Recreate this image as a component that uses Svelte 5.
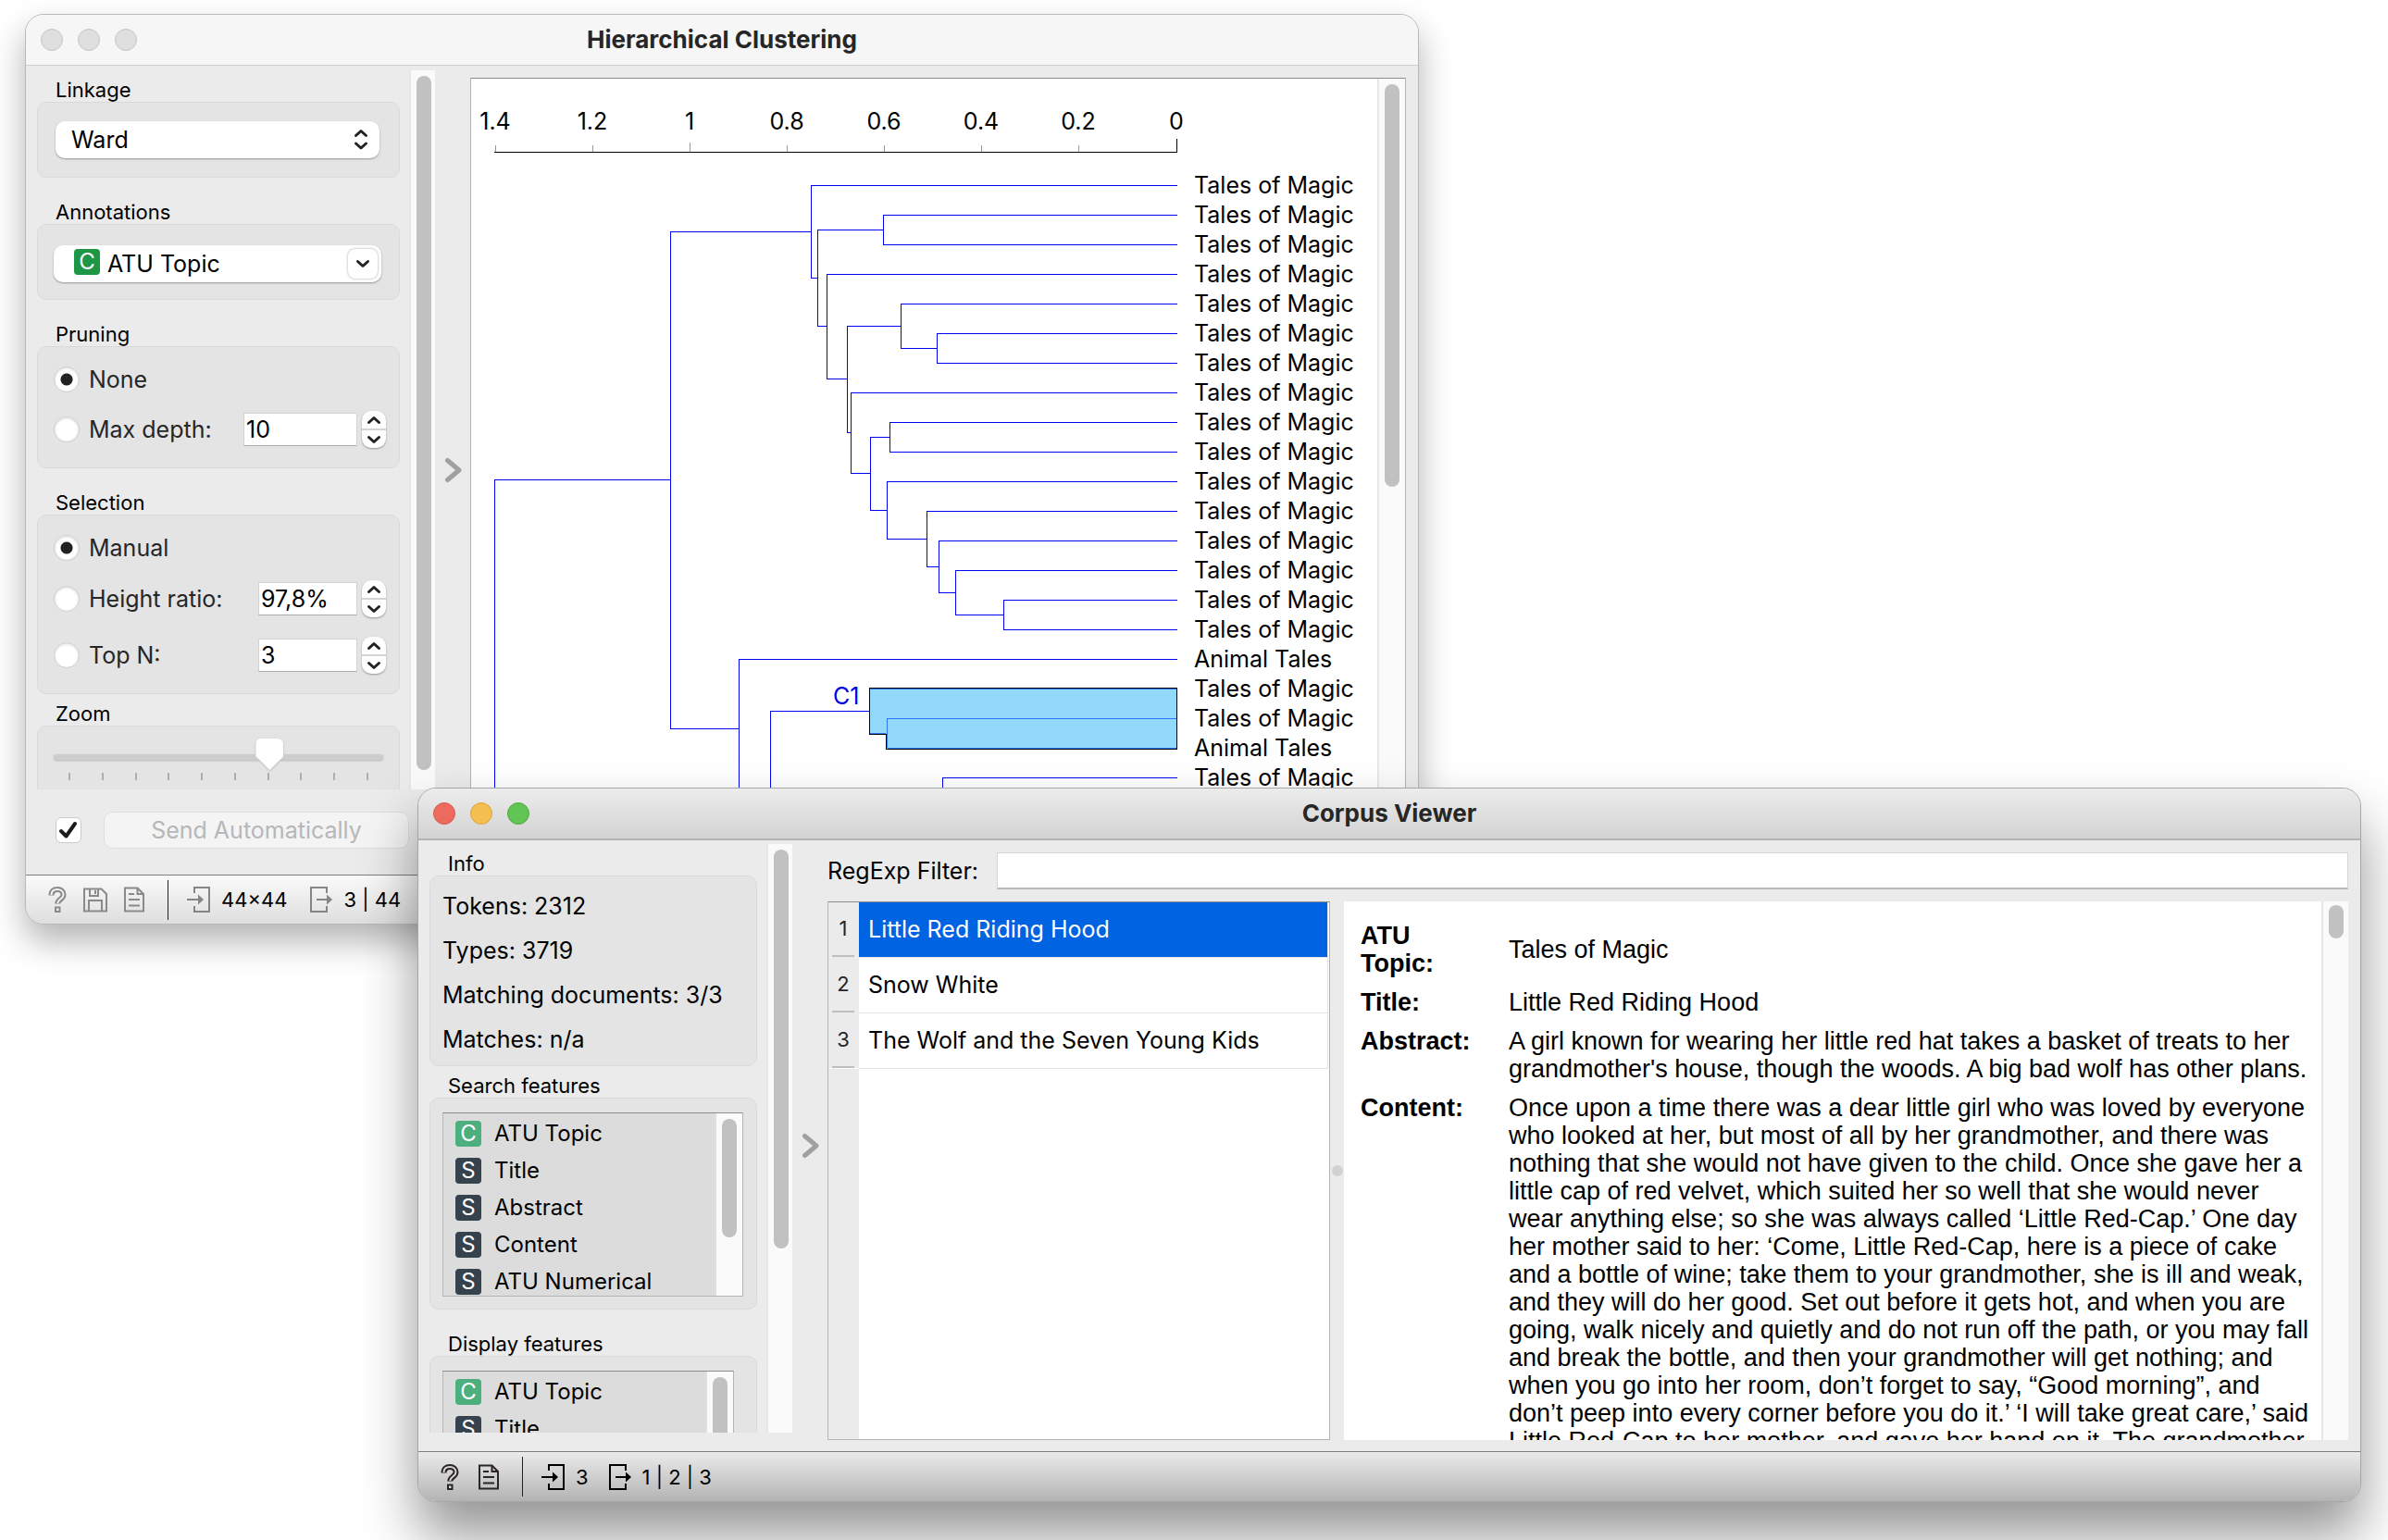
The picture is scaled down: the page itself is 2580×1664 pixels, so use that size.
<script>
  let linkage = $state('Ward');
  let annotation = $state('ATU Topic');
  let pruning = $state('none');
  let selection = $state('manual');
  let maxDepth = $state('10');
  let heightRatio = $state('97,8%');
  let topN = $state('3');
  let zoom = $state(67);
  let autoSend = $state(true);
  let filter = $state('');
  let current = $state(0);

  const axis = [
    { label: '1.4', x: 535, y: 157 },
    { label: '1.2', x: 640, y: 157 },
    { label: '1', x: 745, y: 154 },
    { label: '0.8', x: 850, y: 157 },
    { label: '0.6', x: 955, y: 157 },
    { label: '0.4', x: 1060, y: 157 },
    { label: '0.2', x: 1165, y: 157 },
    { label: '0', x: 1271, y: 150 }
  ];

  // Cluster brackets: joint x, then the two branches as [y, end x]
  const END = 1271;
  const joints = [
    [534, [518, 724], [1100, 534]],
    [724, [250, 876], [787, 798]],
    [876, [200, END], [300, 883]],
    [883, [248, 954], [352, 893]],
    [954, [232, END], [264, END]],
    [893, [296, END], [409, 915]],
    [915, [352, 973], [467, 919]],
    [973, [328, END], [376, 1012]],
    [1012, [360, END], [392, END]],
    [919, [424, END], [511, 940]],
    [940, [472, 961], [551, 958]],
    [961, [456, END], [488, END]],
    [958, [520, END], [582, 1001]],
    [1001, [552, END], [612, 1014]],
    [1014, [584, END], [640, 1032]],
    [1032, [616, END], [664, 1084]],
    [1084, [648, END], [680, END]],
    [798, [712, END], [1000, 798]],
    [832, [768, 939], [1000, 832]],
    [1018, [840, END], [1000, 1018]]
  ];
  const treePath = joints
    .map(([x, [y1, e1], [y2, e2]]) => `M${e1} ${y1}H${x}V${y2}H${e2}`)
    .join('');

  const leaves = Array.from({ length: 21 }, (_, i) => (i === 16 || i === 19 ? 'Animal Tales' : 'Tales of Magic'));

  const info = ['Tokens: 2312', 'Types: 3719', 'Matching documents: 3/3', 'Matches: n/a'];
  const searchFeatures = [
    ['C', 'ATU Topic'],
    ['S', 'Title'],
    ['S', 'Abstract'],
    ['S', 'Content'],
    ['S', 'ATU Numerical']
  ];
  const displayFeatures = [
    ['C', 'ATU Topic'],
    ['S', 'Title']
  ];
  const documents = ['Little Red Riding Hood', 'Snow White', 'The Wolf and the Seven Young Kids'];
  const fields = [
    ['ATU Topic:', 'Tales of Magic'],
    ['Title:', 'Little Red Riding Hood'],
    ['Abstract:', "A girl known for wearing her little red hat takes a basket of treats to her grandmother's house, though the woods. A big bad wolf has other plans."],
    ['Content:', 'Once upon a time there was a dear little girl who was loved by everyone who looked at her, but most of all by her grandmother, and there was nothing that she would not have given to the child. Once she gave her a little cap of red velvet, which suited her so well that she would never wear anything else; so she was always called ‘Little Red-Cap.’ One day her mother said to her: ‘Come, Little Red-Cap, here is a piece of cake and a bottle of wine; take them to your grandmother, she is ill and weak, and they will do her good. Set out before it gets hot, and when you are going, walk nicely and quietly and do not run off the path, or you may fall and break the bottle, and then your grandmother will get nothing; and when you go into her room, don’t forget to say, “Good morning”, and don’t peep into every corner before you do it.’ ‘I will take great care,’ said Little Red-Cap to her mother, and gave her hand on it. The grandmother']
  ];
</script>

{#snippet lights()}
  <div class="lights">
    <button class="light close" aria-label="Close"></button>
    <button class="light minimise" aria-label="Minimise"></button>
    <button class="light expand" aria-label="Zoom"></button>
  </div>
{/snippet}

{#snippet helpIcon()}
  <svg width="20" height="28" viewBox="0 0 20 28" fill="none">
    <path d="M3.500 9.500C3.500 5 6.300 3 10 3s6.500 2.200 6.500 5.800c0 4.700-6.300 4.800-6.300 9.700" stroke="currentColor" stroke-width="6" />
    <path d="M3.500 8V9C3.500 5 6.300 3 10 3s6.500 2.200 6.500 5.800c0 4.700-6.300 4.800-6.300 9.200" stroke="var(--bar)" stroke-width="2" />
    <rect x="8" y="22.500" width="4.500" height="4.500" fill="var(--bar)" stroke="currentColor" stroke-width="2" />
  </svg>
{/snippet}

{#snippet saveIcon()}
  <svg width="26" height="27" viewBox="0 0 26 27" fill="none" stroke="currentColor" stroke-width="2">
    <path d="M1 1.500H19.500L25 7V25.500H1Z" />
    <path d="M7 1.500V9H16V1.500M13 3V7M6 25V14H20V25" />
  </svg>
{/snippet}

{#snippet reportIcon()}
  <svg width="22" height="28" viewBox="0 0 22 28" fill="none" stroke="currentColor" stroke-width="2">
    <path d="M1 1.500H14.500L21 8V26.500H1Z" />
    <path d="M14.500 1.500V8H21M5 8H11M5 14H17M5 20.500H17" />
  </svg>
{/snippet}

{#snippet inputIcon()}
  <svg width="25" height="28" viewBox="0 0 25 28" fill="none" stroke="currentColor" stroke-width="2">
    <path d="M8 7V1H24V27H8V21M0 14H13" />
    <path d="M12 8.500L18 14L12 19.500Z" fill="currentColor" stroke="none" />
  </svg>
{/snippet}

{#snippet outputIcon()}
  <svg width="24" height="28" viewBox="0 0 24 28" fill="none" stroke="currentColor" stroke-width="2">
    <path d="M18 7V1H1V27H18V21M7 14H19" />
    <path d="M18 8.500L24 14L18 19.500Z" fill="currentColor" stroke="none" />
  </svg>
{/snippet}

{#snippet expander(label)}
  <button class="expander" aria-label={label}>
    <svg width="20" height="28" viewBox="0 0 20 28" fill="none" stroke="#a0a0a0" stroke-width="5" stroke-linecap="round" stroke-linejoin="round">
      <path d="M3.500 3.500L16 14L3.500 24.500" />
    </svg>
  </button>
{/snippet}

{#snippet stepper(name)}
  <span class="stepper">
    <button aria-label={`Increase ${name}`}>
      <svg width="16" height="10" viewBox="0 0 16 10"><path d="M2.500 7.500L8 2.500L13.500 7.500" /></svg>
    </button>
    <button aria-label={`Decrease ${name}`}>
      <svg width="16" height="10" viewBox="0 0 16 10"><path d="M2.500 2.500L8 7.500L13.500 2.500" /></svg>
    </button>
  </span>
{/snippet}

{#snippet featureList(name, features, narrow)}
  <div class="features" class:narrow>
    <ul aria-label={name}>
      {#each features as [kind, label]}
        <li><span class="badge" class:string={kind === 'S'}>{kind}</span>{label}</li>
      {/each}
    </ul>
    <div class="track"><div class="thumb"></div></div>
  </div>
{/snippet}

<main class="desktop">
  <section class="window clustering" aria-label="Hierarchical Clustering">
    <header class="titlebar">
      {@render lights()}
      <h1>Hierarchical Clustering</h1>
    </header>

    <div class="body">
      <div class="side">
        <div class="scroller">
          <div class="groups">
            <section class="group">
              <h2><label for="linkage">Linkage</label></h2>
              <div class="box linkage-box">
                <div class="combo">
                  <select id="linkage" bind:value={linkage}>
                    <option>Ward</option>
                    <option>Average</option>
                  </select>
                  <svg class="updown" width="16" height="24" viewBox="0 0 16 24"><path d="M2.500 7.500L8 2.500L13.500 7.500M2.500 16L8 21L13.500 16" /></svg>
                </div>
              </div>
            </section>

            <section class="group">
              <h2><label for="annotation">Annotations</label></h2>
              <div class="box annotation-box">
                <div class="combo">
                  <select id="annotation" class="with-badge" bind:value={annotation}>
                    <option>ATU Topic</option>
                    <option>Title</option>
                  </select>
                  <span class="badge vivid">C</span>
                  <span class="drop"><svg width="16" height="10" viewBox="0 0 16 10"><path d="M2.500 2.500L8 7.500L13.500 2.500" /></svg></span>
                </div>
              </div>
            </section>

            <section class="group">
              <h2>Pruning</h2>
              <div class="box options pruning-box">
                <div class="option">
                  <label><input type="radio" name="pruning" value="none" bind:group={pruning} />None</label>
                </div>
                <div class="option stepped">
                  <label><input type="radio" name="pruning" value="depth" bind:group={pruning} />Max depth:</label>
                  <input class="number wide" aria-label="Maximum depth" bind:value={maxDepth} />
                  {@render stepper('maximum depth')}
                </div>
              </div>
            </section>

            <section class="group">
              <h2>Selection</h2>
              <div class="box options">
                <div class="option">
                  <label><input type="radio" name="selection" value="manual" bind:group={selection} />Manual</label>
                </div>
                <div class="option stepped">
                  <label><input type="radio" name="selection" value="ratio" bind:group={selection} />Height ratio:</label>
                  <input class="number" aria-label="Height ratio" bind:value={heightRatio} />
                  {@render stepper('height ratio')}
                </div>
                <div class="option stepped">
                  <label><input type="radio" name="selection" value="top" bind:group={selection} />Top N:</label>
                  <input class="number" aria-label="Top N" bind:value={topN} />
                  {@render stepper('top N')}
                </div>
              </div>
            </section>

            <section class="group compact">
              <h2><label for="zoom">Zoom</label></h2>
              <div class="box zoom-box">
                <input id="zoom" type="range" min="0" max="100" bind:value={zoom} />
                <div class="ticks">
                  {#each Array(10) as _}<span></span>{/each}
                </div>
              </div>
            </section>
          </div>
          <div class="track"><div class="thumb"></div></div>
        </div>

        <div class="send">
          <span class="check">
            <input type="checkbox" aria-label="Send automatically" bind:checked={autoSend} />
            {#if autoSend}
              <svg width="28" height="28" viewBox="0 0 28 28"><path d="M6 15L11.500 20.500L21 7" fill="none" stroke="#1c1c1c" stroke-width="4" stroke-linecap="round" stroke-linejoin="round" /></svg>
            {/if}
          </span>
          <button class="send-button" disabled>Send Automatically</button>
        </div>
      </div>

      {@render expander('Toggle controls')}

      <div class="view">
        <svg class="tree" width="765" height="834" viewBox="509 85 765 834" shape-rendering="crispEdges" aria-label="Dendrogram">
          {#each axis as tick, i}
            <text x={tick.x} y="140" text-anchor="middle">{tick.label}</text>
            <path d={`M${tick.x} ${tick.y}V164`} stroke={i === axis.length - 1 ? '#000' : '#9a9a9a'} />
          {/each}
          <path d="M534 164.500H1272" stroke="#000" />
          <polygon points="939,743.500 1271.500,743.500 1271.500,809.500 957.500,809.500 957.500,793.500 939,793.500" fill="#92d8fb" stroke="#000" />
          <path d="M1271 776.500H958.500V808M1271 808.500H959M940 792.500H957M1271 744.500H940" fill="none" stroke="#2f75f7" />
          <g transform="translate(0.5 0.5)"><path d={treePath} fill="none" stroke="#0000f5" /></g>
          <text x="900" y="761" class="cluster">C1</text>
        </svg>
        <ol class="leaves">
          {#each leaves as leaf}<li>{leaf}</li>{/each}
        </ol>
        <div class="track"><div class="thumb"></div></div>
      </div>
    </div>

    <footer class="status">
      <button aria-label="Help">{@render helpIcon()}</button>
      <button aria-label="Save">{@render saveIcon()}</button>
      <button aria-label="Report">{@render reportIcon()}</button>
      <span class="divider"></span>
      <span class="port">{@render inputIcon()}<span>44×44</span></span>
      <span class="port">{@render outputIcon()}<span>3 | 44</span></span>
    </footer>
  </section>

  <section class="window corpus" aria-label="Corpus Viewer">
    <header class="titlebar">
      {@render lights()}
      <h1>Corpus Viewer</h1>
    </header>

    <div class="body">
      <div class="side">
        <div class="scroller">
          <div class="groups">
            <section class="group compact">
              <h2>Info</h2>
              <div class="box info-box">
                {#each info as line}<p>{line}</p>{/each}
              </div>
            </section>
            <section class="group compact">
              <h2>Search features</h2>
              <div class="box features-box">{@render featureList('Search features', searchFeatures, false)}</div>
            </section>
            <section class="group">
              <h2>Display features</h2>
              <div class="box features-box">{@render featureList('Display features', displayFeatures, true)}</div>
            </section>
          </div>
          <div class="track"><div class="thumb"></div></div>
        </div>
      </div>

      {@render expander('Toggle controls')}

      <div class="content">
        <div class="filter">
          <label for="filter">RegExp Filter:</label>
          <input id="filter" bind:value={filter} />
        </div>
        <div class="panes">
          <div class="documents">
            <table>
              <tbody>
                {#each documents as name, i}
                  <tr class:current={i === current} onclick={() => (current = i)}>
                    <th scope="row"><span>{i + 1}</span></th>
                    <td>{name}</td>
                  </tr>
                {/each}
              </tbody>
            </table>
            <div class="gutter"></div>
          </div>
          <div class="splitter"><span></span></div>
          <div class="reader">
            <article>
              <table>
                <tbody>
                  {#each fields as [name, value]}
                    <tr><th scope="row">{name}</th><td>{value}</td></tr>
                  {/each}
                </tbody>
              </table>
            </article>
            <div class="track"><div class="thumb"></div></div>
          </div>
        </div>
      </div>
    </div>

    <footer class="status">
      <button aria-label="Help">{@render helpIcon()}</button>
      <button aria-label="Report">{@render reportIcon()}</button>
      <span class="divider"></span>
      <span class="port">{@render inputIcon()}<span>3</span></span>
      <span class="port">{@render outputIcon()}<span>1 | 2 | 3</span></span>
    </footer>
  </section>
</main>

<style>
  :global(body) { background: #fff; }

  .desktop, .desktop * { box-sizing: border-box; }
  .desktop {
    position: relative;
    min-height: 100vh;
    overflow: hidden;
    font: 25px/32px Inter, "Liberation Sans", sans-serif;
    color: #000;
  }
  h1, h2, p, ul, ol { margin: 0; padding: 0; list-style: none; }
  button, input, select { font: inherit; color: inherit; margin: 0; padding: 0; border: 0; background: none; }
  svg { display: block; flex: none; }

  /* Windows */
  .window {
    position: absolute;
    display: flex;
    flex-direction: column;
    overflow: hidden;
    border: 1px solid #b9b9b9;
    border-radius: 20px;
    background: #ebebeb;
  }
  .clustering {
    left: 27px; top: 15px; right: 1047px; bottom: 665px;
    box-shadow: 0 18px 36px rgba(0, 0, 0, .3);
    --bar: #f0f0f0;
  }
  .corpus {
    left: 451px; top: 851px; right: 29px; bottom: 41px;
    border-color: #a6a6a6;
    box-shadow: 0 36px 60px rgba(0, 0, 0, .42);
    --bar: #d6d6d6;
  }

  .titlebar {
    flex: none;
    display: grid;
    grid-template-columns: 1fr auto 1fr;
    align-items: center;
    height: 55px;
    padding: 0 16px;
    border-bottom: 1px solid #cfcfcf;
    background: #f6f6f6;
  }
  .corpus .titlebar { height: 56px; border-bottom: 2px solid #b4b4b4; background: linear-gradient(#ececec, #d3d3d3); }
  h1 { font-size: 26px; font-weight: 700; line-height: 32px; color: #262626; }
  .lights { display: flex; gap: 16px; }
  .light { width: 24px; height: 24px; border: 1px solid #c4c4c4; border-radius: 50%; background: #dfdfdf; }
  .corpus .close { background: #ed6a5e; border-color: #d35b50; }
  .corpus .minimise { background: #f5bf4f; border-color: #d8a442; }
  .corpus .expand { background: #61c554; border-color: #52a844; }

  .body { flex: 1; min-height: 0; display: flex; }
  .clustering .body { padding-top: 5px; }
  .corpus .body { padding-top: 4px; }

  .side { flex: none; display: flex; flex-direction: column; min-height: 0; padding-left: 12px; }
  .clustering .side { width: 442px; }
  .corpus .side { width: 404px; padding-bottom: 20px; }
  .scroller { flex: 1; min-height: 0; display: flex; justify-content: space-between; overflow: hidden; }
  .clustering .groups { width: 392px; }
  .corpus .groups { width: 354px; }

  .track { flex: none; width: 28px; padding: 6px 4px 0 6px; border-left: 2px solid #e6e6e6; background: #fafafa; }
  .thumb { width: 16px; border-radius: 8px; background: #c1c1c1; }
  .clustering .scroller .thumb { height: 750px; }
  .corpus .scroller > .track > .thumb { height: 431px; }

  /* Groups */
  .group { margin-top: 16px; }
  .group:first-child, .group.compact { margin-top: 0; }
  h2 { height: 34px; padding: 8px 20px 0; font-size: 22px; font-weight: 400; line-height: 26px; }
  .box { border: 1px solid #dadada; border-radius: 10px; background: #e4e4e4; }
  .linkage-box { padding: 20px 21px 20px 19px; }
  .annotation-box { padding: 22px 19px 18px 17px; }

  .combo { display: grid; align-items: center; }
  .combo > * { grid-area: 1 / 1; }
  select {
    appearance: none;
    width: 100%;
    height: 40px;
    padding-left: 17px;
    border-radius: 10px;
    background: #fff;
    box-shadow: 0 1px 2px rgba(0, 0, 0, .35);
  }
  select.with-badge { padding-left: 58px; }
  .updown, .drop { justify-self: end; pointer-events: none; }
  .updown { margin-right: 12px; }
  .drop {
    display: grid;
    place-items: center;
    width: 32px;
    height: 32px;
    margin-right: 4px;
    border-radius: 8px;
    background: #fff;
    box-shadow: 0 0 3px rgba(0, 0, 0, .35);
  }
  .updown path, .drop path, .stepper path {
    fill: none; stroke: #222; stroke-width: 3; stroke-linecap: round; stroke-linejoin: round;
  }
  .badge {
    flex: none;
    width: 28px;
    height: 28px;
    border-radius: 4px;
    background: #4caf7d;
    color: #fff;
    font-size: 24px;
    line-height: 28px;
    text-align: center;
  }
  .badge.string { background: #37424f; }
  .badge.vivid { margin: 0 0 4px 22px; background: #1d9745; pointer-events: none; }

  .options { display: flex; flex-direction: column; gap: 21px; padding: 21px 14px 21px 17px; }
  .pruning-box { gap: 20px; }
  .option { display: flex; align-items: center; color: #262626; }
  .option.stepped { height: 40px; }
  .option:not(.stepped) { height: 28px; }
  .option label { flex: 1; display: flex; align-items: center; gap: 10px; white-space: nowrap; }
  input[type='radio'] {
    appearance: none;
    width: 28px;
    height: 28px;
    border: 1px solid #cfcfcf;
    border-radius: 50%;
    background: #fff;
    box-shadow: inset 0 1px 3px rgba(0, 0, 0, .15);
  }
  input[type='radio']:checked { background: radial-gradient(circle, #222 0 6px, #fff 7px); }
  .number {
    width: 107px;
    height: 36px;
    padding-left: 2px;
    border: 1px solid #d2d2d2;
    border-bottom-color: #acacac;
    background: #fff;
    color: #000;
  }
  .number.wide { width: 123px; }
  .stepper {
    display: flex;
    flex-direction: column;
    width: 26px;
    height: 40px;
    margin-left: 5px;
    border-radius: 10px;
    background: #fff;
    box-shadow: 0 1px 2px rgba(0, 0, 0, .35);
  }
  .stepper button { flex: 1; display: grid; place-items: center; }
  .stepper button + button { border-top: 2px solid #d4d4d4; }

  .zoom-box { height: 120px; padding: 16px 17px; }
  input[type='range'] { appearance: none; display: block; width: 100%; height: 34px; filter: drop-shadow(0 1px 1px rgba(0, 0, 0, .2)); }
  input[type='range']::-webkit-slider-runnable-track { height: 6px; border-radius: 3px; background: #cdcdcd; }
  input[type='range']::-webkit-slider-thumb {
    appearance: none;
    width: 30px;
    height: 34px;
    margin-top: -17px;
    border-radius: 6px;
    background: #fff;
    clip-path: polygon(0 0, 100% 0, 100% 56%, 50% 100%, 0 56%);
  }
  .ticks { display: flex; justify-content: space-between; padding: 0 16px; }
  .ticks span { width: 2px; height: 8px; background: #aeaeae; }

  .send { flex: none; display: flex; align-items: center; height: 92px; padding: 0 28px 4px 20px; }
  .check { display: grid; margin-right: 24px; }
  .check > * { grid-area: 1 / 1; pointer-events: none; }
  .check input {
    appearance: none;
    width: 28px;
    height: 28px;
    border: 1px solid #cacaca;
    border-radius: 6px;
    background: #fff;
    pointer-events: auto;
  }
  .send-button {
    flex: 1;
    height: 40px;
    border: 1px solid #dedede;
    border-radius: 10px;
    background: #f4f4f4;
    color: #b7b7b7;
  }

  .expander { flex: none; width: 38px; padding: 0 0 5px 2px; display: grid; place-items: center; }

  /* Dendrogram */
  .view {
    flex: 1;
    min-width: 0;
    display: flex;
    overflow: hidden;
    margin: 8px 13px 18px 0;
    border: 1px solid #b4b4b4;
    border-top-color: #8c8c8c;
    background: #fff;
  }
  .tree { overflow: visible; font-size: 25px; }
  .cluster { fill: #0000e6; }
  .leaves { flex: 1; padding: 99px 0 0 16px; }
  .leaves li { white-space: nowrap; }
  .view .track { width: 30px; }
  .view .thumb { height: 435px; }

  /* Status bars */
  .status {
    flex: none;
    display: flex;
    align-items: center;
    height: 53px;
    padding-left: 24px;
    border-top: 1px solid #7d7d7d;
    background: linear-gradient(#fafafa, #dedede);
    font-size: 22px;
  }
  .status button { margin-right: 18px; color: #8a8a8a; }
  .divider { width: 1px; height: 43px; margin: 0 20px 0 7px; background: #222; }
  .port { display: flex; align-items: center; gap: 12px; margin-right: 25px; white-space: nowrap; }
  .clustering .port svg { color: #858585; }
  .corpus .status { height: 54px; background: linear-gradient(#ebebeb, #b3b3b3); }
  .corpus .status button { margin-right: 21px; color: #2b2525; }
  .corpus .divider { margin: 0 20px 0 4px; }
  .corpus .port { margin-right: 22px; }

  /* Corpus side panel */
  .info-box { padding: 8px 13px 4px; }
  .info-box p { line-height: 48px; white-space: nowrap; }
  .features-box { padding: 15px 14px 13px 13px; }
  .features {
    display: flex;
    height: 199px;
    overflow: hidden;
    border: 1px solid #b4b4b4;
    border-top-color: #8c8c8c;
    background: #dcdcdc;
    font-size: 24px;
  }
  .features.narrow { width: 315px; }
  .features ul { flex: 1; min-width: 0; padding: 2px 0 0 13px; }
  .features li { display: flex; align-items: center; gap: 14px; height: 40px; white-space: nowrap; }
  .features .track { width: 30px; border-left-color: #e0e0e0; }
  .features .thumb { height: 128px; }

  /* Corpus content */
  .content { flex: 1; min-width: 0; display: flex; flex-direction: column; gap: 13px; padding: 9px 13px 12px 0; }
  .filter { flex: none; display: flex; align-items: center; gap: 20px; height: 40px; }
  .filter input {
    flex: 1;
    min-width: 0;
    height: 40px;
    padding: 0 8px;
    border: 1px solid #d6d6d6;
    border-bottom: 2px solid #b8b8b8;
    background: #fff;
  }
  .panes { flex: 1; min-height: 0; display: flex; }
  .documents {
    flex: none;
    display: flex;
    flex-direction: column;
    width: 543px;
    border: 1px solid #b4b4b4;
    border-top-color: #8c8c8c;
    background: #fff;
  }
  .gutter { flex: 1; width: 33px; background: #ebebeb; }
  table { border-collapse: collapse; border-spacing: 0; }
  .documents table { width: 540px; }
  .documents tr { height: 60px; }
  .documents tr:first-child { height: 59px; }
  .documents th { width: 33px; padding: 0 5px 0 4px; background: #ebebeb; font-size: 22px; font-weight: 400; color: #262626; }
  .documents th span { display: block; border-bottom: 2px solid #bebebe; line-height: 57px; }
  .documents td { padding: 0 10px; border-bottom: 1px solid #e3e3e3; border-right: 1px solid #e3e3e3; white-space: nowrap; }
  .documents .current td { background: #0063e1; color: #fff; }

  .splitter { flex: none; display: grid; place-items: center; width: 15px; }
  .splitter span { width: 12px; height: 12px; border-radius: 50%; background: #d2d2d2; }

  .reader { flex: 1; min-width: 0; display: flex; overflow: hidden; background: #fff; }
  article { flex: 1; min-width: 0; padding: 16px 12px 0 18px; font: 27px/30px "Liberation Sans", Arial, sans-serif; }
  article th { width: 160px; padding: 6px 40px 6px 0; text-align: left; vertical-align: top; }
  article td { padding: 6px 0; vertical-align: middle; }
  .reader .track { width: 29px; padding-top: 4px; }
  .reader .thumb { height: 36px; }
</style>
